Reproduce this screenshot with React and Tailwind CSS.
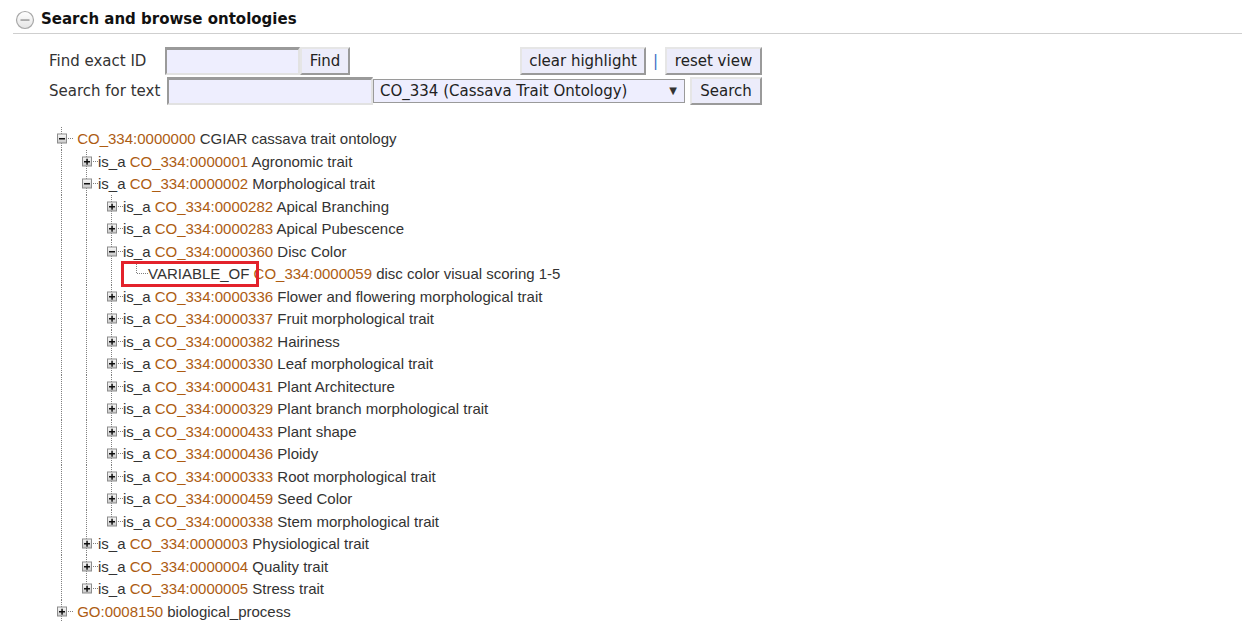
import React from "react";

const rows = [
  { depth: 0, toggle: "minus", rel: "", code: "CO_334:0000000", name: "CGIAR cassava trait ontology" },
  { depth: 1, toggle: "plus", rel: "is_a", code: "CO_334:0000001", name: "Agronomic trait" },
  { depth: 1, toggle: "minus", rel: "is_a", code: "CO_334:0000002", name: "Morphological trait" },
  { depth: 2, toggle: "plus", rel: "is_a", code: "CO_334:0000282", name: "Apical Branching" },
  { depth: 2, toggle: "plus", rel: "is_a", code: "CO_334:0000283", name: "Apical Pubescence" },
  { depth: 2, toggle: "minus", rel: "is_a", code: "CO_334:0000360", name: "Disc Color" },
  { depth: 3, toggle: null, last: true, rel: "VARIABLE_OF", code: "CO_334:0000059", name: "disc color visual scoring 1-5" },
  { depth: 2, toggle: "plus", rel: "is_a", code: "CO_334:0000336", name: "Flower and flowering morphological trait" },
  { depth: 2, toggle: "plus", rel: "is_a", code: "CO_334:0000337", name: "Fruit morphological trait" },
  { depth: 2, toggle: "plus", rel: "is_a", code: "CO_334:0000382", name: "Hairiness" },
  { depth: 2, toggle: "plus", rel: "is_a", code: "CO_334:0000330", name: "Leaf morphological trait" },
  { depth: 2, toggle: "plus", rel: "is_a", code: "CO_334:0000431", name: "Plant Architecture" },
  { depth: 2, toggle: "plus", rel: "is_a", code: "CO_334:0000329", name: "Plant branch morphological trait" },
  { depth: 2, toggle: "plus", rel: "is_a", code: "CO_334:0000433", name: "Plant shape" },
  { depth: 2, toggle: "plus", rel: "is_a", code: "CO_334:0000436", name: "Ploidy" },
  { depth: 2, toggle: "plus", rel: "is_a", code: "CO_334:0000333", name: "Root morphological trait" },
  { depth: 2, toggle: "plus", rel: "is_a", code: "CO_334:0000459", name: "Seed Color" },
  { depth: 2, toggle: "plus", last: true, rel: "is_a", code: "CO_334:0000338", name: "Stem morphological trait" },
  { depth: 1, toggle: "plus", rel: "is_a", code: "CO_334:0000003", name: "Physiological trait" },
  { depth: 1, toggle: "plus", rel: "is_a", code: "CO_334:0000004", name: "Quality trait" },
  { depth: 1, toggle: "plus", last: true, rel: "is_a", code: "CO_334:0000005", name: "Stress trait" },
  { depth: 0, toggle: "plus", rel: "", code: "GO:0008150", name: "biological_process" },
];

const DOT = "#7f7f7f";

// vertical guide for an ancestor level that still has siblings below
const Guide = ({ h }) => (
  <svg width="25" height={h} className="shrink-0 block">
    <line x1="5.5" y1="0" x2="5.5" y2={h} stroke={DOT} strokeDasharray="1 1" />
  </svg>
);

// the node's own cell: connector lines and the +/- box
const NodeCell = ({ h, toggle, last }) => {
  const mid = Math.floor(h / 2) + 0.5;
  return (
    <svg width="17" height={h} className="shrink-0 block">
      <defs>
        <linearGradient id="boxfill" x1="0" y1="0" x2="0" y2="1">
          <stop offset="0" stopColor="#fafafa" />
          <stop offset="1" stopColor="#c8c8c8" />
        </linearGradient>
      </defs>
      <line x1="5.5" y1="0" x2="5.5" y2={last ? mid : h} stroke={DOT} strokeDasharray="1 1" />
      <line x1="6" y1={mid} x2="17" y2={mid} stroke={DOT} strokeDasharray="1 1" />
      {toggle && (
        <g>
          <rect x="1.5" y={mid - 4.5} width="9" height="9" fill="url(#boxfill)" stroke="#8c8c8c" />
          <rect x="3" y={mid - 0.5} width="6" height="1.5" fill="#111" />
          {toggle === "plus" && <rect x="5.3" y={mid - 2.8} width="1.5" height="6" fill="#111" />}
        </g>
      )}
    </svg>
  );
};

const inputCls =
  "bg-[#eeeefe] border-2 border-t-[3px] border-t-[#9a9a9a] border-l-[#9a9a9a] border-b-[#e2e2e2] border-r-[#e2e2e2] outline-none";
const btnCls =
  "bg-[#ececfa] border-2 border-t-[#e6e6e6] border-l-[#e6e6e6] border-b-[#9a9a9a] border-r-[#9a9a9a] text-[15px] text-[#222] leading-none flex items-center justify-center";

export default function App() {
  return (
    <div className="relative w-full min-h-[627px] bg-white">
      {/* Section header */}
      <div className="mx-[13px] w-[1229px] h-[34px] pt-[6px] border-b border-[#cfcfcf] flex items-center font-['DejaVu_Sans',Verdana,sans-serif]">
        <svg width="20" height="20" viewBox="0 0 20 20" className="ml-[2px] shrink-0">
          <defs>
            <linearGradient id="circ" x1="0" y1="0" x2="0" y2="1">
              <stop offset="0" stopColor="#ffffff" />
              <stop offset="1" stopColor="#e4e4e4" />
            </linearGradient>
          </defs>
          <circle cx="10" cy="10" r="8.5" fill="url(#circ)" stroke="#a8a8a8" strokeWidth="1.2" />
          <rect x="5.5" y="9.3" width="9" height="1.5" fill="#9a9a9a" />
        </svg>
        <h2 className="ml-[6px] text-[15px] font-bold text-[#111] leading-none">Search and browse ontologies</h2>
      </div>

      {/* Search form */}
      <div className="mt-[13px] font-['DejaVu_Sans',Verdana,sans-serif] text-[15px] text-[#333]">
        <div className="flex items-center h-[28px] pl-[49px]">
          <span className="w-[116px] shrink-0">Find exact ID</span>
          <input className={`${inputCls} w-[135px] h-[28px]`} />
          <button className={`${btnCls} w-[50px] h-[28px]`}>Find</button>
          <button className={`${btnCls} ml-[170px] w-[126px] h-[28px]`}>clear highlight</button>
          <span className="w-[19px] text-center text-[#3a6cc4]">|</span>
          <button className={`${btnCls} w-[97px] h-[28px]`}>reset view</button>
        </div>
        <div className="flex items-center h-[28px] pl-[49px] mt-[2px]">
          <span className="w-[118px] shrink-0 whitespace-nowrap pt-[1px]">Search for text</span>
          <input className={`${inputCls} w-[206px] h-[28px]`} />
          <div className="w-[312px] h-[24px] bg-[#eeeefe] border border-[#9a9a9a] flex items-center pl-[6px] pr-[7px] text-[#222]">
            <span className="flex-1 leading-none">CO_334 (Cassava Trait Ontology)</span>
            <span className="text-[10px] leading-none text-[#333]">▼</span>
          </div>
          <button className={`${btnCls} ml-[5px] w-[72px] h-[28px]`}>Search</button>
        </div>
      </div>

      {/* Ontology tree */}
      <div className="mt-[22px] pl-[56px] font-['Liberation_Sans',Arial,sans-serif] text-[15px] leading-none text-[#333]">
        {rows.map((r, i) => {
          const h = i % 2 === 0 ? 23 : 22;
          return (
            <div key={i} className={`flex items-center ${i % 2 === 0 ? "h-[23px]" : "h-[22px]"}`}>
              {Array.from({ length: r.depth }).map((_, k) => (
                <Guide key={k} h={h} />
              ))}
              <NodeCell h={h} toggle={r.toggle} last={r.last} />
              <span className="whitespace-pre">
                {r.rel + " "}
                <span className="text-[#ad5c12]">{r.code}</span>
                {" " + r.name}
              </span>
            </div>
          );
        })}
      </div>

      {/* highlight annotation */}
      <div className="absolute left-[121px] top-[261px] w-[138px] h-[26px] border-[3px] border-[#e3222b] pointer-events-none" />
    </div>
  );
}
